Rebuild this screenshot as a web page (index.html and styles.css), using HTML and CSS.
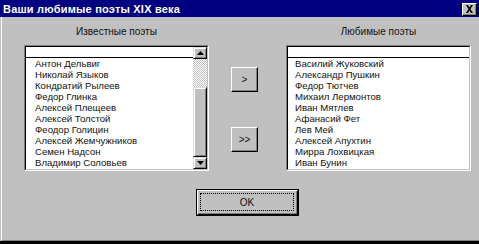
FILE: index.html
```html
<!DOCTYPE html>
<html lang="ru">
<head>
<meta charset="utf-8">
<title>Ваши любимые поэты XIX века</title>
<link rel="stylesheet" href="styles.css">
</head>
<body>
<div class="window">
  <div class="titlebar">
    <span class="title">Ваши любимые поэты XIX века</span>
    <span class="close"><svg width="9" height="8" viewBox="0 0 9 8"><path d="M1 0h2l1.5 2.5L6 0h2L5.5 4 8 8H6L4.5 5.5 3 8H1l2.5-4z" fill="#000"/></svg></span>
  </div>
  <div class="frame">
    <div class="content">
      <div class="panel">
        <div class="label">Известные поэты</div>
        <div class="listbox">
          <div class="listbox-inner">
            <div class="list">
              <div class="list-head"></div>
              <div class="row">Антон Дельвиг</div>
              <div class="row">Николай Языков</div>
              <div class="row">Кондратий Рылеев</div>
              <div class="row">Федор Глинка</div>
              <div class="row">Алексей Плещеев</div>
              <div class="row">Алексей Толстой</div>
              <div class="row">Феодор Голицин</div>
              <div class="row">Алексей Жемчужников</div>
              <div class="row">Семен Надсон</div>
              <div class="row">Владимир Соловьев</div>
            </div>
            <div class="scrollbar">
              <div class="sbtn"><svg width="7" height="4" viewBox="0 0 7 4"><path d="M3.5 0L7 4H0z" fill="#000"/></svg></div>
              <div class="track"></div>
              <div class="thumb"></div>
              <div class="sbtn"><svg width="7" height="4" viewBox="0 0 7 4"><path d="M0 0h7L3.5 4z" fill="#000"/></svg></div>
            </div>
          </div>
        </div>
      </div>
      <div class="middle">
        <div class="btn move">&gt;</div>
        <div class="btn move second">&gt;&gt;</div>
      </div>
      <div class="panel">
        <div class="label">Любимые поэты</div>
        <div class="listbox">
          <div class="listbox-inner">
            <div class="list right">
              <div class="list-head"></div>
              <div class="row">Василий Жуковский</div>
              <div class="row">Александр Пушкин</div>
              <div class="row">Федор Тютчев</div>
              <div class="row">Михаил Лермонтов</div>
              <div class="row">Иван Мятлев</div>
              <div class="row">Афанасий Фет</div>
              <div class="row">Лев Мей</div>
              <div class="row">Алексей Апухтин</div>
              <div class="row">Мирра Лохвицкая</div>
              <div class="row">Иван Бунин</div>
            </div>
          </div>
        </div>
      </div>
    </div>
    <div class="footer">
      <div class="okbtn"><div class="okinner"><span class="focus">OK</span></div></div>
    </div>
  </div>
</div>
</body>
</html>
```

FILE: styles.css
```css
html, body {
  margin: 0;
  padding: 0;
  background: #c0c0c0;
}
body {
  font-family: "Liberation Sans", Arial, sans-serif;
  font-size: 10px;
  color: #111;
}
.window {
  width: 479px;
  height: 244px;
  box-sizing: border-box;
  background: #c0c0c0;
  border-bottom: 3px solid #000;
  display: flex;
  flex-direction: column;
  overflow: hidden;
}
.titlebar {
  height: 17px;
  flex: none;
  background: #000080;
  display: flex;
  align-items: center;
  justify-content: space-between;
  padding: 0 2px 0 3px;
}
.title {
  color: #fff;
  font-weight: bold;
  font-size: 11px;
  letter-spacing: 0.2px;
}
.close {
  width: 15px;
  height: 13px;
  box-sizing: border-box;
  background: #c0c0c0;
  border-top: 1px solid #fff;
  border-left: 1px solid #fff;
  border-right: 1px solid #000;
  border-bottom: 1px solid #000;
  box-shadow: inset -1px -1px #808080;
  display: flex;
  align-items: center;
  justify-content: center;
  margin-top: 1px;
}
.frame {
  flex: 1;
  margin-left: 1px;
  border-left: 1px solid #fff;
  border-bottom: 1px solid #808080;
  display: flex;
  flex-direction: column;
}
.content {
  display: flex;
  align-items: flex-start;
  padding: 9px 0 0 22px;
}
.panel {
  width: 185px;
  display: flex;
  flex-direction: column;
}
.label {
  height: 12px;
  line-height: 12px;
  text-align: center;
  margin-bottom: 7px;
}
.listbox {
  height: 126px;
  box-sizing: border-box;
  border: 1px solid;
  border-color: #808080 #fff #fff #808080;
}
.listbox-inner {
  height: 100%;
  box-sizing: border-box;
  border: 1px solid;
  border-color: #000 #c0c0c0 #c0c0c0 #000;
  background: #fff;
  display: flex;
  overflow: hidden;
}
.list {
  flex: 1;
  overflow: hidden;
}
.list-head {
  height: 10px;
  border-bottom: 1px solid #000;
}
.row {
  height: 11px;
  line-height: 11px;
  font-size: 9.6px;
  padding-left: 9px;
  white-space: nowrap;
}
.list.right .row {
  padding-left: 7px;
}
.scrollbar {
  width: 14px;
  flex: none;
  display: flex;
  flex-direction: column;
}
.sbtn {
  height: 12px;
  flex: none;
  box-sizing: border-box;
  background: #c0c0c0;
  border-top: 1px solid #dfdfdf;
  border-left: 1px solid #dfdfdf;
  border-right: 1px solid #000;
  border-bottom: 1px solid #000;
  box-shadow: inset 1px 1px #fff, inset -1px -1px #808080;
  display: flex;
  align-items: center;
  justify-content: center;
}
.track {
  height: 28px;
  flex: none;
  background: repeating-conic-gradient(#fff 0 25%, #c0c0c0 0 50%) 0 0 / 2px 2px;
}
.thumb {
  flex: 1;
  box-sizing: border-box;
  background: #c0c0c0;
  border-top: 1px solid #dfdfdf;
  border-left: 1px solid #dfdfdf;
  border-right: 1px solid #000;
  border-bottom: 1px solid #000;
  box-shadow: inset 1px 1px #fff, inset -1px -1px #808080;
}
.middle {
  width: 77px;
  display: flex;
  flex-direction: column;
  align-items: flex-start;
  padding-left: 22px;
  box-sizing: border-box;
}
.btn {
  box-sizing: border-box;
  background: #c0c0c0;
  border-top: 1px solid #fff;
  border-left: 1px solid #fff;
  border-right: 1px solid #000;
  border-bottom: 1px solid #000;
  box-shadow: inset -1px -1px #808080;
  display: flex;
  align-items: center;
  justify-content: center;
}
.move {
  width: 27px;
  height: 25px;
  margin-top: 41px;
}
.move.second {
  margin-top: 35px;
}
.footer {
  display: flex;
  padding: 18px 0 0 194px;
}
.okbtn {
  width: 103px;
  height: 27px;
  box-sizing: border-box;
  border: 1px solid #000;
  background: #c0c0c0;
}
.okinner {
  height: 100%;
  box-sizing: border-box;
  border-top: 1px solid #fff;
  border-left: 1px solid #fff;
  border-right: 1px solid #000;
  border-bottom: 1px solid #000;
  box-shadow: inset -1px -1px #808080;
  padding: 2px 3px 3px 2px;
  display: flex;
}
.focus {
  flex: 1;
  border: 1px dotted #000;
  display: flex;
  align-items: center;
  justify-content: center;
}
```
